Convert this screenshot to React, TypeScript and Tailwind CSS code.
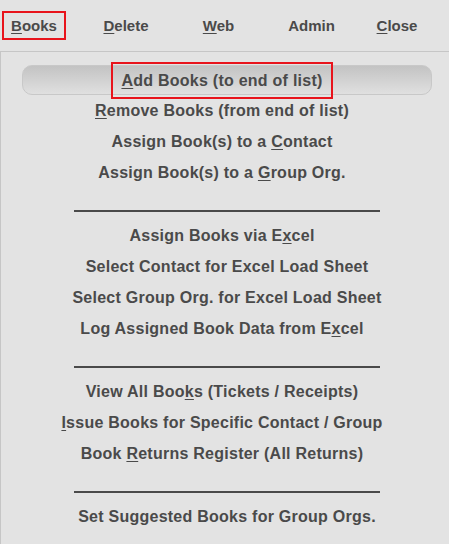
import React from "react";

type Item = { pre: string; key: string; post: string };

const groups: Item[][] = [
  [
    { pre: "", key: "R", post: "emove Books (from end of list)" },
    { pre: "Assign Book(s) to a ", key: "C", post: "ontact" },
    { pre: "Assign Book(s) to a ", key: "G", post: "roup Org." },
  ],
  [
    { pre: "Assign Books via E", key: "x", post: "cel" },
    { pre: "Select Contact for Excel Load Sheet", key: "", post: "" },
    { pre: "Select Group Org. for Excel Load Sheet", key: "", post: "" },
    { pre: "Log Assigned Book Data from E", key: "x", post: "cel" },
  ],
  [
    { pre: "View All Boo", key: "k", post: "s (Tickets / Receipts)" },
    { pre: "", key: "I", post: "ssue Books for Specific Contact / Group" },
    { pre: "Book ", key: "R", post: "eturns Register (All Returns)" },
  ],
  [{ pre: "Set Suggested Books for Group Orgs.", key: "", post: "" }],
];

const topMenu = [
  { key: "B", rest: "ooks", w: "w-[68px]", active: true },
  { key: "D", rest: "elete", w: "w-[116px]", active: false },
  { key: "W", rest: "eb", w: "w-[69px]", active: false },
  { key: "", rest: "Admin", w: "w-[117px]", active: false },
  { key: "C", rest: "lose", w: "w-[54px]", active: false },
];

function Label({ item }: { item: Item }) {
  return (
    <span className="whitespace-pre">
      {item.pre}
      {item.key && <span className="underline underline-offset-2">{item.key}</span>}
      {item.post}
    </span>
  );
}

export default function App() {
  return (
    <div
      className="w-[449px] h-[544px] overflow-hidden bg-[#e3e3e3] text-[#4a4a4a] font-bold"
      style={{ fontFamily: '"Liberation Sans", Arial, sans-serif' }}
    >
      {/* menu bar */}
      <div className="flex h-[51px] items-center text-[15px]">
        {topMenu.map((m) => (
          <div key={m.rest} className={`${m.w} flex justify-center`}>
            <span
              className={
                "px-[7px] py-[3px] border-2 leading-[19px] " +
                (m.active ? "border-[#e8141c]" : "border-transparent")
              }
            >
              {m.key && <span className="underline underline-offset-2">{m.key}</span>}
              {m.rest}
            </span>
          </div>
        ))}
      </div>

      <div className="flex h-[493px]">
        {/* sliver of the page underneath */}
        <div className="w-[1px] flex flex-col bg-[#c9d9ec]">
          <div className="h-[8px] bg-[#8d9bb0]" />
          <div className="h-[52px]" />
          <div className="h-[17px] bg-[#f06a2a]" />
          <div className="h-[10px]" />
          <div className="h-[29px] bg-[#f06a2a]" />
          <div className="h-[26px]" />
          <div className="h-[6px] bg-[#404a5a]" />
          <div className="flex-1 bg-[#dde3f0]" />
        </div>

        {/* dropdown panel */}
        <div className="w-[453px] shrink-0 border-l border-t border-[#c6c6c6] pt-[13px] text-[16px] leading-[31px] tracking-[0.25px]">
          <div className="mx-[21px] h-[30px] rounded-[10px] border border-[#c8c8c8] bg-gradient-to-b from-[#c3c3c3] to-[#e0e0e0] flex items-center justify-center pr-[10px]">
            <span className="border-2 border-[#e8141c] px-[8px] leading-[33px] -my-[4px]">
              <span className="underline underline-offset-2">A</span>dd Books (to end of list)
            </span>
          </div>

          {groups.map((g, gi) => (
            <div key={gi}>
              {gi > 0 && (
                <div className="pt-[22px] pb-[8px] flex justify-center">
                  <div className="w-[306px] h-[2px] bg-[#4a4a4a]" />
                </div>
              )}
              {g.map((item, i) => (
                <div key={i} className={"h-[31px] text-center " + (item.key ? "pr-[10px]" : "")}>
                  <Label item={item} />
                </div>
              ))}
            </div>
          ))}
        </div>
      </div>
    </div>
  );
}
